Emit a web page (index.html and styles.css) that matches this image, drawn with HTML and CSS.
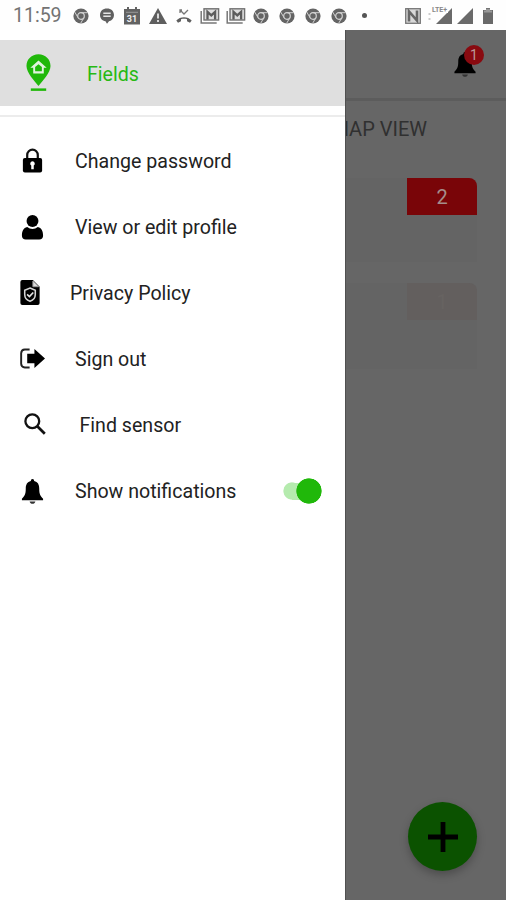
FILE: index.html
```html
<!DOCTYPE html>
<html lang="en">
<head>
<meta charset="utf-8">
<title>Fields</title>
<link rel="stylesheet" href="styles.css">
</head>
<body>
<svg class="defs" width="0" height="0" aria-hidden="true">
  <symbol id="chrome" viewBox="0 0 16 16">
    <circle cx="8" cy="8" r="7.6" fill="#646464"/>
    <circle cx="8" cy="8" r="3.3" fill="none" stroke="#d4d4d4" stroke-width="1.2"/>
    <path d="M8 4.7h6.8M5.1 9.7L1.7 4M10.9 9.7L7.6 15.4" fill="none" stroke="#d0d0d0" stroke-width="1"/>
  </symbol>
  <symbol id="mail" viewBox="0 0 20 16">
    <path d="M1.2 3v12h15.5" fill="none" stroke="#777" stroke-width="1.5"/>
    <rect x="4" y=".8" width="14.6" height="11.2" fill="#ddd" stroke="#707070" stroke-width="1.4"/>
    <path d="M7.5 11.5V3.8l3.8 3.6 3.8-3.6v7.7" fill="none" stroke="#5c5c5c" stroke-width="2.3"/>
  </symbol>
  <symbol id="bell" viewBox="0 0 22 26">
    <path d="M11 0c1.2 0 1.7.8 1.7 2.2C16.500 3 18 6 18 10c0 6 1.200 8 4 10.500V22H0v-1.500C2.800 18 4 16 4 10c0-4 1.500-7 5.300-7.800C9.300.8 9.800 0 11 0z"/>
    <path d="M8 23.300h6c-.4 1.600-1.500 2.500-3 2.500s-2.600-.9-3-2.500z" fill="#333"/>
  </symbol>
</svg>

<div class="screen">
  <header class="status">
    <span class="clock">11:59</span>
    <div class="notices">
      <svg class="ic"><use href="#chrome"/></svg>
      <svg class="ic" viewBox="0 0 16 16"><path d="M8 .5c4.200 0 7 2.700 7 6.500 0 3.300-2 5.600-5 6.200L8 15.800l-1.500-2.500C3.200 12.800 1 10.300 1 7 1 3.200 3.800.5 8 .5z" fill="#606060"/><path d="M4.300 5.300h7.400M4.300 8.200h7.400" stroke="#e5e5e5" stroke-width="1.400"/></svg>
      <svg class="cal" viewBox="0 0 18 18"><path d="M1 2h3V0h2v2h6V0h2v2h3v15.500H1z" fill="#626262"/><path d="M3 5.300h12" stroke="#999" stroke-width="1"/><text x="9" y="14.800" text-anchor="middle">31</text></svg>
      <svg class="warn" viewBox="0 0 18 16"><path d="M9 0l9 16H0z" fill="#5e5e5e"/><path d="M9 5.500v5M9 12v2" stroke="#eee" stroke-width="1.700"/></svg>
      <svg class="ic" viewBox="0 0 16 16"><path d="M4 2l4 4 4-4M4 5V2h2" fill="none" stroke="#777" stroke-width="1.300"/><path d="M.3 12.500C4 8 12 8 15.700 12.500L14 14.700l-3-1.500v-2c-2-.6-4-.6-6 0v2l-3 1.500z" fill="#5e5e5e"/></svg>
      <svg class="mail"><use href="#mail"/></svg>
      <svg class="mail"><use href="#mail"/></svg>
      <svg class="ic"><use href="#chrome"/></svg>
      <svg class="ic"><use href="#chrome"/></svg>
      <svg class="ic"><use href="#chrome"/></svg>
      <svg class="ic"><use href="#chrome"/></svg>
      <i class="more"></i>
    </div>
    <div class="system">
      <svg width="16" height="16" viewBox="0 0 16 16"><rect x=".7" y=".7" width="14.600" height="14.600" fill="#d8d8d8" stroke="#777" stroke-width="1.300"/><path d="M4 13.500V3.500L12 12.500V2.500" fill="none" stroke="#666" stroke-width="2.600"/></svg>
      <svg width="25" height="18" viewBox="0 0 25 18"><path d="M25 2v16H9z" fill="#6a6a6a"/><path d="M2.500 7v2M2.500 12v2" stroke="#ccc" stroke-width="2"/><path d="M4 0h17v7H4z" fill="#fefefe"/><text x="5" y="6">LTE+</text></svg>
      <svg width="16" height="16" viewBox="0 0 16 16"><path d="M16 0v16H0z" fill="#6a6a6a"/></svg>
      <svg class="battery" width="10" height="16" viewBox="0 0 10 16"><path d="M3 0h4v2h3v14H0V2h3z" fill="#696969"/><path d="M3 .8h4v1.700h2v2H1v-2h2z" fill="#999"/></svg>
    </div>
  </header>

  <div class="body">
    <nav class="drawer">
      <a class="fields">
        <svg class="pin" viewBox="0 0 26 39"><path d="M13 0c7.200 0 12.500 5.300 12.500 12.200C25.500 19 17 28 13 33 9 28 .5 19 .5 12.200.500 5.300 5.800 0 13 0z" fill="#20b80a"/><path d="M4.500 14L13 6.500 21.500 14h-3v6h-11v-6z" fill="#e2f3df"/><path d="M13 10.300l3.500 3V17.600h-7v-4.300z" fill="#20b80a"/><path d="M5 36.800h16" stroke="#20b80a" stroke-width="2.600"/></svg>
        <span>Fields</span>
      </a>
      <hr class="rule">
      <ul class="menu">
        <li><svg class="mi lock" viewBox="0 0 20 26"><path d="M4.500 12V7.200a5.500 5.500 0 0 1 11 0V12" fill="none" stroke="#111" stroke-width="2.300"/><rect y="10.500" width="20" height="15" rx="2"/><path d="M10 13.800a2.400 2.400 0 0 1 1.300 4.400v3.800H8.700v-3.800A2.400 2.400 0 0 1 10 13.800z" fill="#fff"/></svg><span>Change password</span></li>
        <li><svg class="mi user" viewBox="0 0 22 26"><circle cx="11" cy="6.300" r="6.200"/><path d="M5.500 12.600c3.300 2.700 7.700 2.700 11 0 4 .9 5.500 4.400 5.500 8.900 0 2.500-1.500 4-4 4h-14c-2.500 0-4-1.500-4-4 0-4.500 1.500-8 5.500-8.900z"/></svg><span>View or edit profile</span></li>
        <li class="tight"><svg class="mi doc" viewBox="0 0 20 26"><path d="M2 0h11l7 7v17a2 2 0 0 1-2 2H2a2 2 0 0 1-2-2V2a2 2 0 0 1 2-2z"/><path d="M13 1v6h6z" fill="#ddd" stroke="#999"/><path d="M10 8.300l5.500 2.400v4.500c0 3.500-2.500 6-5.500 7-3-1-5.500-3.500-5.500-7v-4.500z" fill="none" stroke="#d5d5d5" stroke-width="1.600"/><path d="M7 15l2.400 2.300 4-4.300" fill="none" stroke="#e5e5e5" stroke-width="1.700"/></svg><span>Privacy Policy</span></li>
        <li><svg class="mi exit" viewBox="0 0 26 21"><path d="M10 1.200H5A4 4 0 0 0 1.200 5v11A4 4 0 0 0 5 19.800h5" fill="none" stroke="#222" stroke-width="2"/><path d="M7.500 5.500H15V.5l11 10-11 10V15.500H7.500z"/></svg><span>Sign out</span></li>
        <li class="wide"><svg class="mi search" viewBox="0 0 22 22"><circle cx="8.300" cy="8.300" r="6.900" fill="none" stroke="#111" stroke-width="2.300"/><path d="M13.300 13.300l7.500 7.500" stroke="#111" stroke-width="2.700"/></svg><span>Find sensor</span></li>
        <li><svg class="mi bell"><use href="#bell"/></svg><span>Show notifications</span><i class="switch"></i></li>
      </ul>
    </nav>

    <main class="page">
      <div class="topbar">
        <div class="alerts"><svg class="bell-top"><use href="#bell"/></svg><b class="count">1</b></div>
      </div>
      <div class="tab"><span>MAP VIEW</span></div>
      <section class="card"><b class="tag">2</b></section>
      <section class="card second"><b class="tag faint">1</b></section>
      <button class="add" aria-label="Add"><svg viewBox="0 0 30 30"><path d="M15 0v30M0 15h30" stroke="#000" stroke-width="4.800"/></svg></button>
    </main>
  </div>
</div>
</body>
</html>
```
FILE: styles.css
```css
* { box-sizing: border-box; }
body { margin: 0; font-family: Roboto, "Liberation Sans", sans-serif; background: #fff; color: #222; }
svg { display: block; flex: none; }
.defs { position: absolute; }
.screen { width: 506px; height: 900px; display: flex; flex-direction: column; overflow: hidden; }

.status { height: 30px; flex: none; display: flex; align-items: center; padding-left: 13px; background: #fefefe; }
.clock { width: 55px; padding-top: 2px; font-size: 19.500px; line-height: 30px; color: #737373; white-space: nowrap; }
.notices { display: grid; grid-template-columns: repeat(12, 25.800px); justify-items: center; align-items: center; height: 30px; padding-top: 1px; }
.ic { width: 16px; height: 16px; }
.cal { width: 18px; height: 18px; }
.cal text { font: 700 9px Roboto, sans-serif; fill: #eee; }
.warn { width: 18px; height: 16px; }
.mail { width: 20px; height: 16px; }
.more { width: 5px; height: 5px; border-radius: 50%; background: #555; }
.system { display: flex; align-items: flex-end; height: 16px; margin: 1px 0 0 27px; gap: 6px; }
.system svg:nth-child(3) { margin-left: -1px; }
.system text { font: 700 7px Roboto, sans-serif; fill: #888; }
.battery { margin-left: 4px; }

.body { flex: 1; display: flex; min-height: 0; }
.drawer { width: 345px; flex: none; padding-top: 10px; background: #fff; }
.fields { display: flex; align-items: center; height: 66px; padding-left: 26px; background: #dfdfdf; font-size: 19.600px; color: #27b914; }
.pin { width: 25px; height: 38px; }
.fields span { margin-left: 36px; padding-top: 2px; }
.rule { height: 2px; margin: 9px 0 11px; border: 0; background: #ececec; }
.menu { list-style: none; margin: 0; padding: 0; }
.menu li { display: flex; align-items: center; height: 66px; padding-left: 20px; font-size: 19.600px; }
.menu span { white-space: nowrap; margin-left: 30px; padding-top: 1px; }
.menu .tight span { margin-left: 25px; }
.menu .wide span { margin-left: 34.500px; }
.mi { width: 25px; height: 25px; }
.menu .lock, .menu .exit, .menu .doc { margin-bottom: 1px; }
.menu .doc { width: 20px; margin-right: 5px; }
.menu .exit { height: 21px; }
.menu .search { width: 22px; height: 22px; margin: 0 -1px 2px 4px; }
.switch { width: 39px; height: 26px; margin-left: auto; margin-right: 23.500px; border-radius: 13px; background: radial-gradient(circle at 26px 13px, #20b80a 12.300px, transparent 13px), linear-gradient(#b5ebae, #b5ebae) 9px 4.500px / 17px 17px no-repeat, radial-gradient(circle at 9px 13px, #b5ebae 8.200px, transparent 9px); }

.page { flex: 1; min-width: 0; display: flex; flex-direction: column; overflow: hidden; background: #666; border-left: 1px solid #505050; position: relative; }
.topbar { height: 71px; flex: none; border-bottom: 3px solid #5c5c5c; padding: 15px 0 0 108px; }
.alerts { position: relative; width: 32px; height: 34px; }
.bell-top { width: 22px; height: 25px; position: absolute; left: 0; top: 7px; }
.count { position: absolute; left: 10px; top: 0; width: 20px; height: 20px; border-radius: 50%; background: #890a10; color: #b99; font-size: 14px; font-weight: 400; line-height: 21px; text-align: center; }
.tab { height: 56px; flex: none; display: flex; justify-content: flex-end; padding-right: 79px; font-size: 20px; line-height: 56px; color: #303030; white-space: nowrap; }
.card { height: 84px; flex: none; margin: 21px 29px 0 0; border-radius: 0 7px 0 0; background: #646464; display: flex; justify-content: flex-end; align-items: flex-start; }
.second { height: 86px; }
.tag { width: 70px; height: 37px; border-radius: 0 8px 0 0; background: #790508; color: #a58e8b; font-size: 20px; font-weight: 400; line-height: 39px; text-align: center; }
.faint { background: #635f5e; color: #676361; }
.add { display: flex; align-items: center; justify-content: center; width: 69px; height: 69px; margin: auto 29px 29px auto; border: 0; border-radius: 50%; background: #0b5200; box-shadow: 0 4px 8px rgba(0,0,0,.25); padding: 0; }
.add svg { width: 30px; height: 30px; }
```
